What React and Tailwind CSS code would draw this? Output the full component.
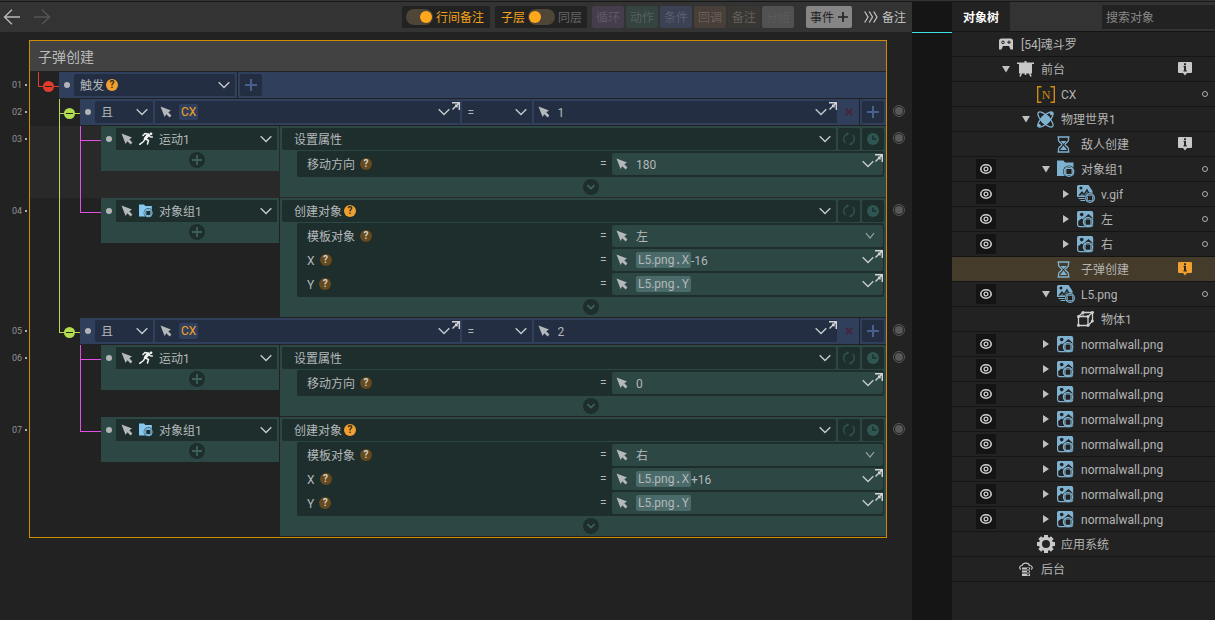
import React, { useState } from "react";

/* ---------- icons ---------- */

const Chevron = ({ className = "text-[#c4c8cc]" }) => (
  <svg width="12" height="8" viewBox="0 0 12 8" fill="none" stroke="currentColor" strokeWidth="1.4" className={`shrink-0 ${className}`}>
    <path d="M0.7 1.2 6 6.5l5.3-5.3" />
  </svg>
);

const ThinChevron = () => (
  <svg width="10" height="8" viewBox="0 0 10 8" fill="none" stroke="#9aa5a3" strokeWidth="1.1" className="shrink-0">
    <path d="M1 1.2 5 6.2l4-5" />
  </svg>
);

const Cursor = () => (
  <svg width="12" height="12" viewBox="0 0 12 12" fill="#b4b8ba" className="shrink-0">
    <path d="M0.5 0.5 11 4.6 8.3 6.3 11.4 9.6 9.6 11.4 6.3 8.2 4.6 11z" />
  </svg>
);

const Expand = () => (
  <svg width="9" height="9" viewBox="0 0 9 9" fill="none" stroke="#d2d5d6" strokeWidth="1.4">
    <path d="M1 0.700h7.300V8M8 1 1.500 7.500M4 3.200h2v2.200" />
  </svg>
);

const Plus = ({ size = 12, className = "", thick = 2 }) => (
  <svg width={size} height={size} viewBox="0 0 12 12" stroke="currentColor" strokeWidth={thick} className={className}>
    <path d="M6 0v12M0 6h12" />
  </svg>
);

const Refresh = () => (
  <svg width="14" height="14" viewBox="0 0 14 14" fill="none" stroke="#2f5350" strokeWidth="1.4">
    <path d="M5 2A5.4 5.4 0 0 0 3.4 11M9 12A5.4 5.4 0 0 0 10.600 3" />
    <path d="M4.300 0.200 7.200 1.600 5 3.800zM9.700 13.800 6.800 12.400 9 10.200z" fill="#2f5350" stroke="none" />
  </svg>
);

const Clock = () => (
  <svg width="12" height="12" viewBox="0 0 12 12">
    <circle cx="6" cy="6" r="6" fill="#2f5652" />
    <path d="M6 2.500V6h3.500" fill="none" stroke="#1e2d2c" strokeWidth="1.4" />
  </svg>
);

const Runner = () => (
  <svg width="14" height="14" viewBox="0 0 14 14" fill="none" stroke="#f4f4f4" strokeWidth="1.5" strokeLinecap="round" strokeLinejoin="round">
    <circle cx="12" cy="1.800" r="1.400" fill="#f4f4f4" stroke="none" />
    <path d="M4 3.500 6 1.500 9.800 2.300 11 4.800 13.300 5" />
    <path d="M9 3.200 6.300 6.500" strokeWidth="3" />
    <path d="M6.500 7 9.500 8.500 8.500 12M5.800 7.200 4.500 9.500 0.700 12.300" />
  </svg>
);

const Folder = ({ size = 18, color = "#7fb2d0", back = "#222222" }) => (
  <svg width={size} height={size} viewBox="0 0 18 18">
    <path d="M0 0.500h6.500L8 2.500h8.500V16H0z" fill={color} />
    <circle cx="12" cy="11.500" r="6" fill={back} />
    <rect x="8.800" y="8.300" width="6.400" height="6.400" rx="1" fill="none" stroke={color} strokeWidth="1.200" />
    <circle cx="12" cy="11.500" r="4.800" fill="none" stroke={color} strokeWidth="1.300" />
  </svg>
);

const Picture = () => (
  <svg width="17" height="17" viewBox="0 0 17 17">
    <rect x="0.600" y="0.600" width="15" height="15" rx="2" fill="none" stroke="#7fb2d0" strokeWidth="1.200" />
    <path d="M0 9V2a2 2 0 0 1 2-2h12a2 2 0 0 1 2 2v6L11.500 4 7 9 4.500 7.500 1.500 10z" fill="#7fb2d0" />
    <circle cx="4.700" cy="3.600" r="1.800" fill="#222222" />
    <path d="M6.500 8.500 11.500 4l3.500 3.200" fill="none" stroke="#222222" strokeWidth="1.300" />
    <circle cx="11" cy="11" r="5.400" fill="#222222" />
    <circle cx="11" cy="11" r="4.600" fill="none" stroke="#7fb2d0" strokeWidth="1.200" />
    <rect x="8" y="8" width="6" height="6.300" rx="1" fill="none" stroke="#7fb2d0" strokeWidth="1.200" />
  </svg>
);

const Gif = () => (
  <svg width="18" height="18" viewBox="0 0 18 18">
    <path d="M0 11.500V1.500A1.500 1.500 0 0 1 1.500 0h10l4 6v6H0z" fill="#7fb2d0" />
    <path d="M1.200 10.500 5 6l2 2.500L10 3.500 14 11z" fill="#222222" />
    <path d="M2.500 11.800 5 8.200l2 2.300L10 6l3 5.800z" fill="#7fb2d0" opacity=".55" />
    <circle cx="4" cy="3" r="1.500" fill="#222222" />
    <path d="M1.500 13.500h7M3.500 15.500h5" stroke="#7fb2d0" strokeWidth="1.100" />
    <circle cx="13" cy="13" r="5.400" fill="#222222" />
    <circle cx="13" cy="13" r="4.300" fill="none" stroke="#7fb2d0" strokeWidth="1.300" />
    <rect x="10.300" y="10.300" width="5.400" height="5.400" rx="1" fill="none" stroke="#7fb2d0" strokeWidth="1" />
  </svg>
);

const Hourglass = () => (
  <svg width="13" height="17" viewBox="0 0 13 17" fill="none" stroke="#7fb2d0" strokeWidth="1.300">
    <path d="M0.500 1h12M0.500 16h12M1.500 1v3c0 2.500 3.500 3 3.500 4.500S1.500 10.500 1.500 13v3M11.500 1v3c0 2.500-3.500 3-3.500 4.500s3.500 2 3.500 4.500v3" />
    <path d="M3.500 5h6L6.500 8zM6.500 9.500 10 14H3z" fill="#7fb2d0" stroke="none" />
  </svg>
);

const Gamepad = () => (
  <svg width="14" height="12" viewBox="0 0 14 12">
    <path d="M2.500 0.500h9A2.500 2.500 0 0 1 14 3v8.500h-2.500L10 8H4l-1.500 3.500H0V3A2.500 2.500 0 0 1 2.500 0.500z" fill="#c8c8c8" />
    <circle cx="4" cy="4.300" r="1.300" fill="none" stroke="#222222" />
    <path d="M10 2.500v3.600M8.200 4.300h3.600" stroke="#222222" strokeWidth="1.100" />
  </svg>
);

const Easel = () => (
  <svg width="17" height="16" viewBox="0 0 17 16" fill="#c8c8c8">
    <rect x="0" y="1.500" width="17" height="1.500" />
    <rect x="2" y="2" width="13" height="10.500" />
    <rect x="7.500" y="0" width="2" height="2" />
    <path d="M4.500 12 3 15.500M12.500 12l1.500 3.500M8.500 12v2" stroke="#c8c8c8" strokeWidth="1.600" />
  </svg>
);

const NumberVar = () => (
  <svg width="18" height="17" viewBox="0 0 18 17">
    <path d="M4.500 0.700H0.700v15.600h3.800M13.500 0.700h3.800v15.600h-3.800" fill="none" stroke="#d08a10" strokeWidth="1.400" />
    <text x="9" y="12.500" fontSize="12" textAnchor="middle" fill="#d08a10" fontFamily="Liberation Serif, serif">N</text>
  </svg>
);

const Physics = () => (
  <svg width="17" height="17" viewBox="0 0 17 17" fill="none" stroke="#7fb2d0" strokeWidth="1.300">
    <ellipse cx="8.500" cy="8.500" rx="10" ry="3.800" transform="rotate(45 8.500 8.500)" />
    <ellipse cx="8.500" cy="8.500" rx="10" ry="3.800" transform="rotate(-45 8.500 8.500)" />
    <circle cx="8.500" cy="8.500" r="4.600" fill="#7fb2d0" stroke="none" />
    <circle cx="2" cy="14.500" r="1.800" fill="#7fb2d0" stroke="none" />
    <circle cx="14.500" cy="2.500" r="1.800" fill="#7fb2d0" stroke="none" />
  </svg>
);

const Cube = () => (
  <svg width="17" height="16" viewBox="0 0 17 16" fill="none" stroke="#d0d0d0" strokeWidth="1.300">
    <path d="M1.500 5.500h9.500v9H1.500zM1.500 5.500 6 1.500h9.500L11 5.500M15.500 1.500v8.500L11 14.500" />
    <path d="M6 1.500v4" opacity=".6" />
    <g fill="#d0d0d0" stroke="none">
      <circle cx="1.500" cy="5.500" r="1.500" />
      <circle cx="11" cy="5.500" r="1.500" />
      <circle cx="1.500" cy="14.300" r="1.500" />
      <circle cx="11" cy="14.300" r="1.500" />
      <circle cx="15.300" cy="1.600" r="1.500" />
      <circle cx="6" cy="1.600" r="1.500" />
      <circle cx="15.300" cy="10" r="1.500" />
    </g>
  </svg>
);

const Gear = () => (
  <svg width="18" height="18" viewBox="0 0 18 18" stroke="#c8c8c8" fill="none">
    <circle cx="9" cy="9" r="5.600" strokeWidth="3.200" />
    <g strokeWidth="4">
      <path d="M9 0v3M9 15v3M0 9h3M15 9h3M2.700 2.700l2 2M13.300 13.300l2 2M2.700 15.300l2-2M13.300 4.700l2-2" />
    </g>
  </svg>
);

const Server = () => (
  <svg width="14" height="15" viewBox="0 0 14 15" fill="none" stroke="#c8c8c8" strokeWidth="1.200">
    <path d="M2 7.500C0 6.500 0.500 3.500 3 3.500 4 0.500 9.500 0 10.500 3.500c3 0 3.500 3 1.500 4" />
    <path d="M3 5.500h8v2H3zM3 8.500h8v2H3zM3 11.500h8v2.500H3z" fill="#c8c8c8" stroke="none" />
    <path d="M8 6.500h2M8 9.500h2M8 12.700h2" stroke="#222222" strokeWidth="1" />
  </svg>
);

const Eye = () => (
  <svg width="12" height="10" viewBox="0 0 12 10" fill="none" stroke="#d0d0d0" strokeWidth="1.600">
    <ellipse cx="6" cy="5" rx="5.200" ry="4.200" />
    <circle cx="6" cy="5" r="1.900" strokeWidth="1.300" />
  </svg>
);

const Info = ({ color }) => (
  <svg width="14" height="14" viewBox="0 0 14 14">
    <path d="M1 0h12a1 1 0 0 1 1 1v9a1 1 0 0 1-1 1H9l-2 2.500L5 11H1a1 1 0 0 1-1-1V1a1 1 0 0 1 1-1z" fill={color} />
    <path d="M6 1.200h2v2H6zM5.500 4h2.500v5H6V5h-.5zM5.500 8.300h3.300v1.100H5.500z" fill="#2a2a2a" />
  </svg>
);

const NavArrow = ({ flip }) => (
  <svg width="18" height="16" viewBox="0 0 18 16" fill="none" stroke="currentColor" strokeWidth="1.400">
    {flip ? <path d="M1 8h15M9 0.700 16.500 8 9 15.300" /> : <path d="M17 8H2M9 0.700 1.500 8 9 15.300" />}
  </svg>
);

/* ---------- small parts ---------- */

const Help = ({ dim }) => (
  <button
    aria-label="帮助"
    className={`flex h-3 w-3 shrink-0 items-center justify-center rounded-full text-[10px] leading-3 font-bold ${
      dim ? "bg-[#65491f] text-[#d8d0c4]" : "ml-0.5 bg-[#f0a02f] text-[#3a2a10]"
    }`}
  >
    ?
  </button>
);

const Bullet = () => <span className="h-1.5 w-1.5 shrink-0 rounded-full bg-[#b2b4b8]" />;

const Select = ({ label, value, help }) => (
  <>
    <select aria-label={label} className="field-sizing-content appearance-none bg-transparent pt-px outline-none">
      <option>{value}</option>
    </select>
    {help && <Help />}
  </>
);

const ExpandCorner = () => (
  <button aria-label="展开编辑" className="absolute top-px right-0">
    <Expand />
  </button>
);

const Node = ({ color }) => (
  <button aria-label="折叠" className={`absolute top-[9px] left-[5px] flex h-[11px] w-[11px] items-center justify-center rounded-full ${color}`}>
    <span className="h-px w-[7px] bg-[#222222]" />
  </button>
);

// one level of the branch lines in front of a row
const Branch = ({ color, node, last }) => (
  <div className="relative flex w-[21px] shrink-0 flex-col">
    <div className={`h-[15px] border-b border-l ${color}`} />
    {!last && <div className={`flex-1 border-l ${color}`} />}
    {node && <Node color={node} />}
  </div>
);

const Trunk = ({ show }) => (
  <div className={`w-[21px] shrink-0 ${show ? "border-l border-[#b4dc50]" : ""}`} />
);

const Row = ({ no, dot = true, active, bottom, children }) => (
  <div className="grid grid-cols-[29px_minmax(0,1fr)_25px]">
    <div className="flex h-[26px] items-center justify-end gap-[3px] pr-[2px] text-[9px] text-[#929292]">
      {no}
      <span className="h-[2px] w-[2px] bg-[#b0b0b0]" />
    </div>
    <div
      className={`flex border-x border-[#d08c00] ${active ? "bg-[#292929]" : ""} ${bottom ? "border-b" : ""}`}
    >
      {children}
    </div>
    <div className="pt-1.5 pl-1.5">
      {dot && (
        <button aria-label="断点" className="flex h-3 w-3 items-center justify-center rounded-full border border-[#585858]">
          <span className="h-2 w-2 rounded-full bg-[#585858]" />
        </button>
      )}
    </div>
  </div>
);

/* ---------- event rows ---------- */

const TriggerRow = () => (
  <Row no="01" dot={false}>
    <div className="w-2 shrink-0" />
    <Branch color="border-[#e33b2c]" node="bg-[#e33b2c]" last />
    <div className="mb-px flex h-[26px] flex-1 items-center bg-[#30405c]">
      <div className="flex h-full w-[179px] items-center gap-1 border-r border-[#222222] pr-0.5 pl-[5px]">
        <Bullet />
        <div className="flex h-[22px] flex-1 items-center rounded-xs bg-[#232e43] pr-[5px] pl-1.5">
          <Select label="触发" value="触发" help />
          <Chevron className="ml-auto text-[#c4c8cc]" />
        </div>
      </div>
      <button aria-label="添加条件" className="ml-0.5 flex h-[22px] w-[22px] items-center justify-center rounded-xs bg-[#232e43] text-[#48608c]">
        <Plus />
      </button>
    </div>
  </Row>
);

const ConditionRow = ({ no, value, last }) => (
  <Row no={no}>
    <div className="w-[29px] shrink-0" />
    <Branch color="border-[#b4dc50]" node="bg-[#b4dc50]" last={last} />
    <div className="mb-px flex h-[26px] min-w-0 flex-1 items-center gap-0.5 bg-[#30405c] pr-0.5 pl-[5px]">
      <Bullet />
      <div className="ml-[2px] flex h-[22px] w-[58px] items-center rounded-xs bg-[#232e43] pr-[5px] pl-1.5">
        <Select label="逻辑" value="且" />
        <Chevron className="ml-auto text-[#c4c8cc]" />
      </div>
      <div className="relative flex h-[22px] min-w-0 flex-1 items-center bg-[#232e43] pr-2.5 pl-[5px]">
        <Cursor />
        <span className="ml-[7px] flex h-4 items-center rounded-xs bg-[#2f3f5d] px-0.5 text-[#f5a623]">CX</span>
        <Chevron className="ml-auto text-[#c4c8cc]" />
        <ExpandCorner />
      </div>
      <div className="flex h-[22px] w-[70px] items-center bg-[#232e43] pr-[5px] pl-1.5">
        <Select label="比较" value="=" />
        <Chevron className="ml-auto text-[#c4c8cc]" />
      </div>
      <div className="relative flex h-[22px] min-w-0 flex-1 items-center gap-2 bg-[#232e43] pr-2.5 pl-1">
        <Cursor />
        <input aria-label="比较值" defaultValue={value} className="min-w-0 flex-1 bg-transparent pt-px outline-none" />
        <Chevron />
        <ExpandCorner />
      </div>
      <div className="flex h-full w-[21px] items-center justify-center border-r border-[#222222]">
        <button aria-label="删除条件" className="text-[#46263c]">
          <svg width="8" height="8" viewBox="0 0 8 8" stroke="currentColor" strokeWidth="2.200">
            <path d="M1 1l6 6M7 1 1 7" />
          </svg>
        </button>
      </div>
      <button aria-label="添加条件" className="flex h-[22px] w-[22px] items-center justify-center rounded-xs bg-[#232e43] text-[#48608c]">
        <Plus />
      </button>
    </div>
  </Row>
);

const Param = ({ label, value, refName, select }) => (
  <div className="flex h-[22px] items-center">
    <span className="flex min-w-0 flex-1 items-center gap-[5px] pl-2.5">
      <span className="pt-px">{label}</span>
      <Help dim />
    </span>
    <span className="w-3">=</span>
    <div className={`relative flex h-[22px] w-[271px] items-center gap-2 rounded-xs bg-[#2d4745] pl-1 ${select ? "pr-2" : "pr-[9px]"}`}>
      <Cursor />
      {select ? (
        <>
          <select aria-label={label} className="min-w-0 flex-1 appearance-none bg-transparent pt-px outline-none">
            <option>{value}</option>
          </select>
          <ThinChevron />
        </>
      ) : (
        <>
          <div className="flex min-w-0 flex-1 items-center">
            {refName && (
              <span className="flex h-4 shrink-0 items-center rounded-xs bg-[#4a6b69] px-0.5">
                L5.png<span className="font-['DejaVu_Sans_Mono',monospace]">{refName}</span>
              </span>
            )}
            <input aria-label={label} defaultValue={value} className="min-w-0 flex-1 bg-transparent pt-px outline-none" />
          </div>
          <Chevron />
          <ExpandCorner />
        </>
      )}
    </div>
  </div>
);

const ActionRow = ({ no, target, icon, action, help, params, trunk, last, active, bottom }) => (
  <Row no={no} active={active} bottom={bottom}>
    <div className="w-[29px] shrink-0" />
    <Trunk show={trunk} />
    <Branch color="border-[#e050e8]" last={last} />
    <div className="mb-px flex min-w-0 flex-1 items-start">
      <div className="flex w-[178px] shrink-0 flex-col bg-[#2d4745] pt-0.5 pr-0.5 pb-[3px] pl-[5px]">
        <div className="flex items-center gap-1">
          <Bullet />
          <div className="flex h-[22px] flex-1 items-center gap-1.5 bg-[#1e2e2d] px-[5px]">
            <Cursor />
            {icon}
            <Select label="对象" value={target} />
            <Chevron className="ml-auto text-[#c4c8cc]" />
          </div>
        </div>
        <button aria-label="添加动作" className="mt-0.5 ml-[83px] flex h-4 w-4 items-center justify-center rounded-full bg-[#1e2e2d] text-[#3c5f5c]">
          <Plus size={10} thick={2.2} />
        </button>
      </div>
      <div className="ml-px min-w-0 flex-1 bg-[#2d4745] p-0.5">
        <div className="flex gap-0.5">
          <div className="flex h-[22px] min-w-0 flex-1 items-center rounded-xs bg-[#1e2e2d] pr-[5px] pl-3">
            <Select label="动作" value={action} help={help} />
            <Chevron className="ml-auto text-[#c4c8cc]" />
          </div>
          <button aria-label="循环" className="flex h-[22px] w-[22px] items-center justify-center rounded-xs bg-[#1e2e2d]">
            <Refresh />
          </button>
          <button aria-label="延时" className="flex h-[22px] w-[22px] items-center justify-center rounded-xs bg-[#1e2e2d]">
            <Clock />
          </button>
        </div>
        <div className="ml-[15px]">
          <div className="mt-px flex flex-col gap-0.5 rounded-xs bg-[#1e2e2d] py-0.5 pr-px">
            {params.map((p) => (
              <Param key={p.label} {...p} />
            ))}
          </div>
          <button aria-label="展开参数" className="mx-auto mt-0.5 flex h-4 w-4 items-center justify-center rounded-full bg-[#1e2e2d]">
            <svg width="8" height="6" viewBox="0 0 8 6" fill="none" stroke="#3f6461" strokeWidth="1.600">
              <path d="M0.500 1 4 4.500 7.500 1" />
            </svg>
          </button>
        </div>
      </div>
    </div>
  </Row>
);

const EventEditor = () => {
  const folder = <Folder size={14} color="#86c8f0" back="#1e2e2d" />;
  const move = (value) => [{ label: "移动方向", value }];
  const create = (side, offset) => [
    { label: "模板对象", value: side, select: true },
    { label: "X", refName: ".X", value: offset },
    { label: "Y", refName: ".Y", value: "" },
  ];

  return (
    <main className="pt-2 text-[#b4b8ba]">
      <div className="mr-[25px] ml-[29px] border border-b-0 border-[#d08c00] pb-px">
        <h1 className="h-[30px] bg-[#424242] pl-2 text-[14px] leading-8 text-[#bcbcbc]">子弹创建</h1>
      </div>
      <TriggerRow />
      <ConditionRow no="02" value="1" />
      <ActionRow no="03" target="运动1" icon={<Runner />} action="设置属性" params={move("180")} trunk active />
      <ActionRow no="04" target="对象组1" icon={folder} action="创建对象" help params={create("左", "-16")} trunk last />
      <ConditionRow no="05" value="2" last />
      <ActionRow no="06" target="运动1" icon={<Runner />} action="设置属性" params={move("0")} />
      <ActionRow no="07" target="对象组1" icon={folder} action="创建对象" help params={create("右", "+16")} last bottom />
    </main>
  );
};

/* ---------- toolbar ---------- */

const Toggle = ({ label, on, onChange }) => (
  <label className="relative flex h-4 w-[27px] cursor-pointer items-center rounded-full bg-[#4f4637] px-px">
    <input type="checkbox" aria-label={label} checked={on} onChange={onChange} className="absolute inset-0 appearance-none" />
    <span className={`h-3 w-3 rounded-full bg-[#ffa81c] ${on ? "ml-auto" : ""}`} />
  </label>
);

const kinds = [
  ["循环", "bg-[#453d4b] text-[#605866]"],
  ["动作", "bg-[#354341] text-[#53615f]"],
  ["条件", "bg-[#3a4254] text-[#5a6070]"],
  ["回调", "bg-[#483f38] text-[#6a6058]"],
  ["备注", "bg-[#393733] text-[#636059]"],
  ["分组", "bg-[#515151] text-[#5a5a5a]"],
];

const Toolbar = () => {
  const [notes, setNotes] = useState(true);
  const [sibling, setSibling] = useState(false);

  return (
    <header className="flex h-[30px] items-center bg-[#333333] pr-[6px] pl-[3px]">
      <button aria-label="后退" className="text-[#b8b8b8]">
        <NavArrow />
      </button>
      <button aria-label="前进" className="ml-3 text-[#565656]">
        <NavArrow flip />
      </button>

      <div className="ml-auto flex h-[22px] items-center gap-[3px] rounded-xs bg-[#222222] pr-1.5 pl-1 text-[#f5a21c]">
        <Toggle label="行间备注" on={notes} onChange={() => setNotes(!notes)} />
        <span className="pt-px">行间备注</span>
      </div>
      <div className="ml-[5px] flex h-[22px] items-center gap-[3px] rounded-xs bg-[#222222] pr-[5px] pl-1.5">
        <span className="pt-px text-[#f5a21c]">子层</span>
        <Toggle label="子层或同层" on={sibling} onChange={() => setSibling(!sibling)} />
        <span className="pt-px text-[#666666]">同层</span>
      </div>

      <div className="ml-[5px] flex gap-0.5">
        {kinds.map(([name, color]) => (
          <button key={name} className={`h-[22px] w-8 rounded-xs pt-px ${color}`}>
            {name}
          </button>
        ))}
      </div>

      <button className="ml-3 flex h-[22px] items-center gap-1 rounded-xs bg-[#868686] px-1 text-[#222222]">
        <span className="pt-px">事件</span>
        <Plus size={10} />
      </button>
      <button className="ml-3 flex items-center gap-1 text-[#c0c0c0]">
        <svg width="14" height="12" viewBox="0 0 14 12" fill="none" stroke="currentColor" strokeWidth="1.300">
          <path d="M0.700 0.500 4 6 0.700 11.500M5.200 0.500 8.500 6 5.200 11.500M9.700 0.500 13 6 9.700 11.500" />
        </svg>
        <span className="pt-px">备注</span>
      </button>
    </header>
  );
};

/* ---------- object tree ---------- */

const wall = { name: "normalwall.png", level: 3, icon: <Picture />, arrow: "right", eye: true };

const objects = [
  { name: "[54]魂斗罗", level: 0, icon: <Gamepad />, pad: true },
  { name: "前台", level: 1, icon: <Easel />, arrow: "down", info: "#c8c8c8" },
  { name: "CX", level: 2, icon: <NumberVar />, ring: true },
  { name: "物理世界1", level: 2, icon: <Physics />, arrow: "down" },
  { name: "敌人创建", level: 3, icon: <Hourglass />, info: "#c8c8c8" },
  { name: "对象组1", level: 3, icon: <Folder />, arrow: "down", eye: true, ring: true },
  { name: "v.gif", level: 4, icon: <Gif />, arrow: "right", eye: true, ring: true },
  { name: "左", level: 4, icon: <Picture />, arrow: "right", eye: true, ring: true },
  { name: "右", level: 4, icon: <Picture />, arrow: "right", eye: true, ring: true },
  { name: "子弹创建", level: 3, icon: <Hourglass />, info: "#f0a02f", active: true },
  { name: "L5.png", level: 3, icon: <Gif />, arrow: "down", eye: true, ring: true },
  { name: "物体1", level: 4, icon: <Cube /> },
  ...Array(8).fill(wall),
  { name: "应用系统", level: 2, icon: <Gear /> },
  { name: "后台", level: 1, icon: <Server />, pad: true },
];

const TreeRow = ({ name, level, icon, arrow, eye, ring, info, active, pad }) => (
  <li className={`flex h-[25px] items-center border-b border-[#141414] pr-[7px] pl-6 ${active ? "bg-[#443b2a]" : ""}`}>
    <span className="h-5 w-5 shrink-0">
      {eye && (
        <button aria-label="显示或隐藏" className="flex h-5 w-5 items-center justify-center bg-[#141414]">
          <Eye />
        </button>
      )}
    </span>
    <div className="flex min-w-0 flex-1 items-center" style={{ paddingLeft: Math.max(level - 1, 0) * 20 }}>
      {level > 0 && (
        <span className="flex w-5 shrink-0 justify-center">
          {arrow && (
            <button aria-label="展开" className="text-[#c0c0c0]">
              <svg width="8" height="8" viewBox="0 0 8 8" fill="currentColor">
                {arrow === "down" ? <path d="M0 1h8L4 7.500z" /> : <path d="M1 0v8l6-4z" />}
              </svg>
            </button>
          )}
        </span>
      )}
      <span className={`flex w-[25px] shrink-0 ${pad ? "pl-[3px]" : "pl-px"}`}>{icon}</span>
      <span className="truncate pt-0.5">{name}</span>
    </div>
    <span className="w-3.5">{info && <Info color={info} />}</span>
    <span className="ml-2.5 flex h-1.5 w-1.5">
      {ring && <span className="h-1.5 w-1.5 rounded-full border border-[#b0b0b0]" />}
    </span>
  </li>
);

const ObjectTree = () => (
  <aside className="w-[263px] shrink-0 text-[#b4b4b4]">
    <div className="flex h-[30px] items-center justify-between border-b border-[#141414] bg-[#333333]">
      <button className="h-full w-[58px] bg-[#222222] pt-0.5 font-bold text-white">对象树</button>
      <input
        aria-label="搜索对象"
        placeholder="搜索对象"
        className="h-6 w-[113px] bg-[#222222] px-1 pt-0.5 text-[#b4b4b4] outline-none placeholder:text-[#888888]"
      />
    </div>
    <ul>
      {objects.map((o, i) => (
        <TreeRow key={i} {...o} />
      ))}
    </ul>
  </aside>
);

export default function App() {
  return (
    <div className="flex min-h-screen flex-col border-t border-[#333333] bg-[#222222] font-[Roboto,'Noto_Sans_CJK_SC',sans-serif] text-[12px] leading-4">
      <div className="flex flex-1 border-t border-[#191919]">
        <div className="min-w-0 flex-1">
          <Toolbar />
          <EventEditor />
        </div>
        <div className="w-10 shrink-0 bg-[#151515]">
          <div className="h-[31px] border-b border-[#3fe0e8]" />
        </div>
        <ObjectTree />
      </div>
    </div>
  );
}
